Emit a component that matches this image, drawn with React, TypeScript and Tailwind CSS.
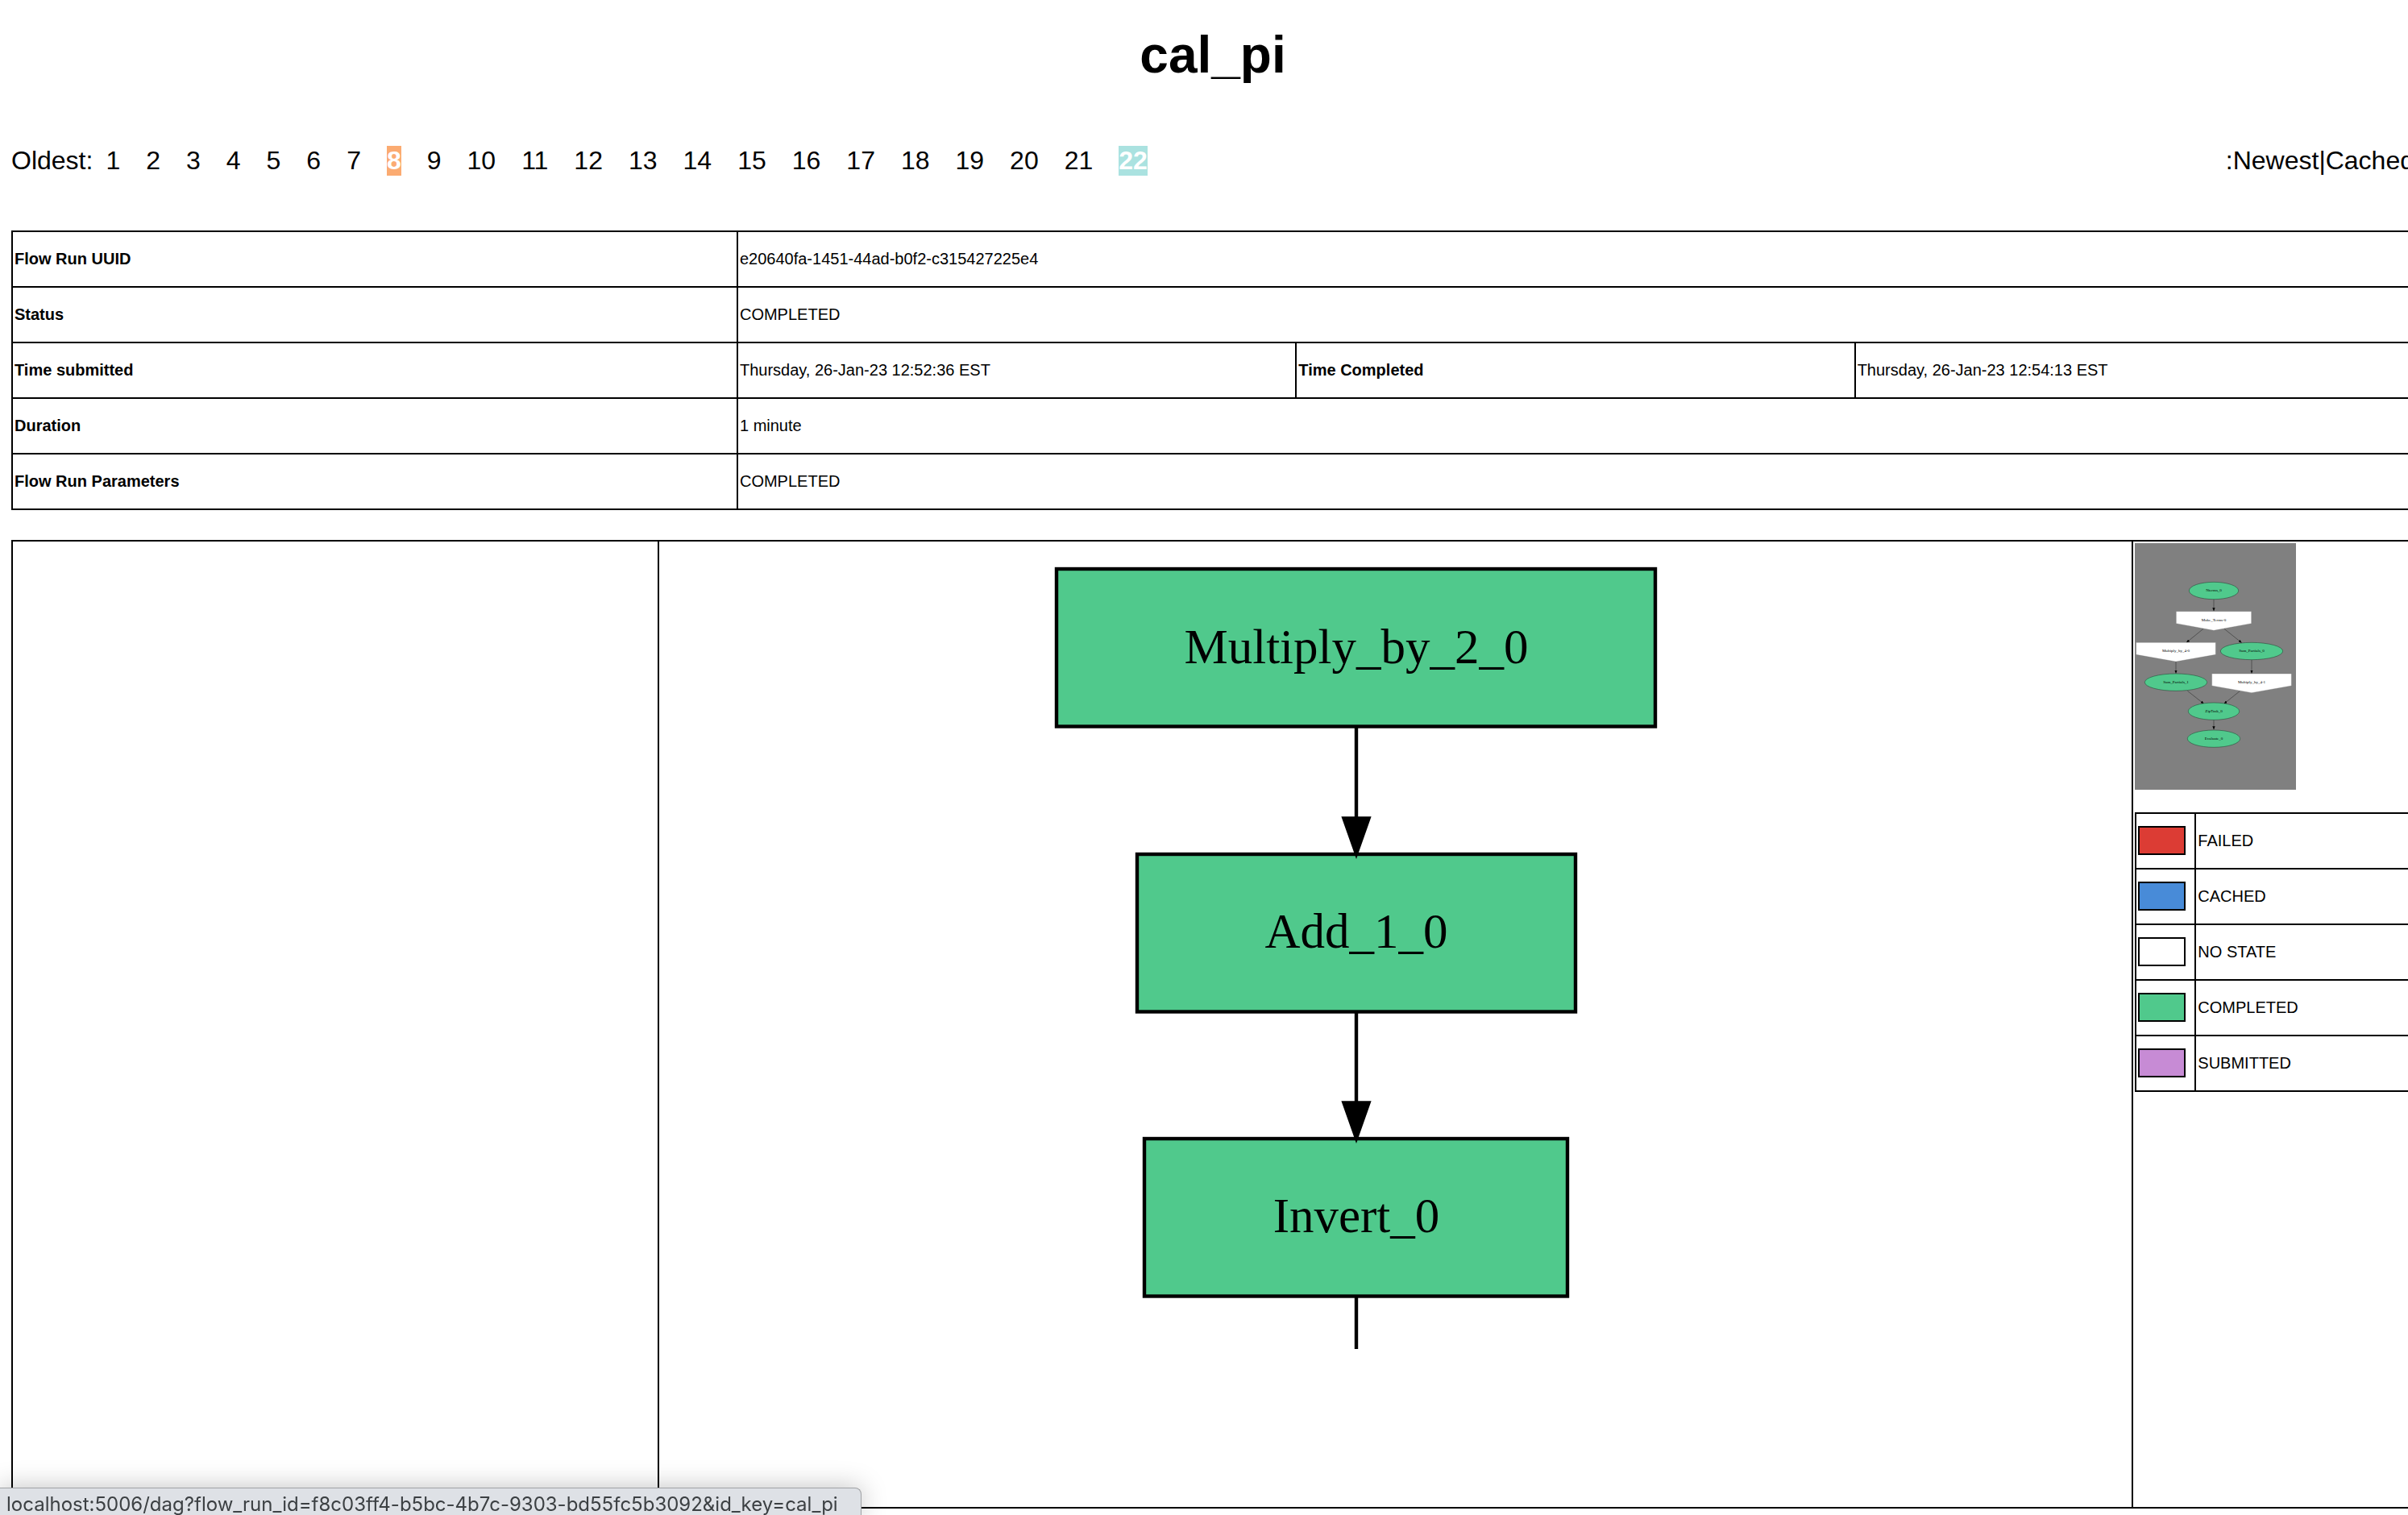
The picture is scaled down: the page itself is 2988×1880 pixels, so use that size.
import React from "react";

const GREEN = "#50c98c";

const runs = Array.from({ length: 22 }, (_, i) => i + 1);

const runStyle: Record<number, string> = {
  8: "bg-[#fbab71] font-bold text-white",
  22: "bg-[#aae2e0] font-bold text-white",
};

const cell = "border-2 border-black p-[2px] pb-1 text-left align-middle";

function RunNav() {
  return (
    <nav className="flex items-start justify-between text-[32px] leading-[37px]">
      <div className="flex gap-4">
        <span>Oldest:</span>
        <div className="flex gap-8">
          {runs.map((n) => (
            <a key={n} href={`#run-${n}`} className={runStyle[n] ?? ""}>
              {n}
            </a>
          ))}
        </div>
      </div>
      <div>
        <span>:Newest</span>|<a href="#cached">Cached</a>
      </div>
    </nav>
  );
}

function DetailRow({ label, value }: { label: string; value: string }) {
  return (
    <tr className="h-[69px]">
      <th scope="row" className={`${cell} font-bold`}>{label}</th>
      <td colSpan={3} className={cell}>{value}</td>
    </tr>
  );
}

function RunDetails() {
  return (
    <table className="w-full table-fixed border-collapse text-[20px] leading-6">
      <colgroup>
        <col className="w-[30.2%]" />
        <col />
        <col />
        <col />
      </colgroup>
      <tbody>
        <DetailRow label="Flow Run UUID" value="e20640fa-1451-44ad-b0f2-c315427225e4" />
        <DetailRow label="Status" value="COMPLETED" />
        <tr className="h-[69px]">
          <th scope="row" className={`${cell} font-bold`}>Time submitted</th>
          <td className={cell}>Thursday, 26-Jan-23 12:52:36 EST</td>
          <th scope="row" className={`${cell} font-bold`}>Time Completed</th>
          <td className={cell}>Thursday, 26-Jan-23 12:54:13 EST</td>
        </tr>
        <DetailRow label="Duration" value="1 minute" />
        <DetailRow label="Flow Run Parameters" value="COMPLETED" />
      </tbody>
    </table>
  );
}

const tasks = [
  { name: "Multiply_by_2_0", x: 491, y: 32, w: 743, base: 149 },
  { name: "Add_1_0", x: 591, y: 386, w: 544, base: 502 },
  { name: "Invert_0", x: 600, y: 739, w: 525, base: 855 },
];

function TaskGraph() {
  return (
    <svg
      width="1800"
      height="1000"
      viewBox="0 0 1800 1000"
      className="block max-w-none overflow-hidden"
      role="img"
      aria-label="Task graph"
      stroke="black"
      strokeWidth="4.4"
      fontFamily='"Liberation Serif", serif'
      fontSize="61"
    >
      {tasks.map((t) => (
        <g key={t.name}>
          <rect x={t.x} y={t.y} width={t.w} height="195.5" fill={GREEN} />
          <text x="863" y={t.base} textAnchor="middle" fill="black" stroke="none">
            {t.name}
          </text>
        </g>
      ))}
      <path d="M863 228V342M863 581V695M863 935V1010" fill="none" />
      <path d="M847.5 341.5H878.5L863 385.5Z" fill="black" />
      <path d="M847.5 694.5H878.5L863 738.5Z" fill="black" />
    </svg>
  );
}

const ellipses = [
  { name: "Nterms_0", x: 294, y: 177, rx: 92 },
  { name: "Sum_Partials_0", x: 435, y: 402, rx: 116 },
  { name: "Sum_Partials_1", x: 153, y: 518, rx: 116 },
  { name: "ZipTask_0", x: 294, y: 626, rx: 95 },
  { name: "Evaluate_0", x: 294, y: 728, rx: 98 },
];

const houses = [
  { name: "Make_Terms-0", x: 294, y: 254, hw: 140 },
  { name: "Multiply_by_4-0", x: 153, y: 370, hw: 148 },
  { name: "Multiply_by_4-1", x: 435, y: 486, hw: 148 },
];

const links = [
  [294, 209, 294, 253],
  [255, 319, 192, 370],
  [333, 319, 398, 371],
  [153, 441, 153, 485],
  [435, 434, 435, 485],
  [196, 550, 257, 598],
  [392, 550, 332, 598],
  [294, 658, 294, 694],
];

function Overview() {
  return (
    <svg
      width="200"
      height="306"
      viewBox="0 0 600 918"
      className="block bg-[#808080]"
      role="img"
      aria-label="Flow overview"
      fontFamily='"Liberation Serif", serif'
      fontSize="15"
    >
      <defs>
        <marker id="tip" viewBox="0 0 12 10" refX="12" refY="5" markerWidth="12" markerHeight="10" markerUnits="userSpaceOnUse" orient="auto">
          <path d="M0 0L12 5L0 10Z" />
        </marker>
      </defs>
      {links.map(([x1, y1, x2, y2]) => (
        <line key={`${x1}-${y1}-${x2}`} x1={x1} y1={y1} x2={x2} y2={y2} stroke="#222" strokeWidth="1.5" markerEnd="url(#tip)" />
      ))}
      {ellipses.map((e) => (
        <g key={e.name}>
          <ellipse cx={e.x} cy={e.y} rx={e.rx} ry="32" fill={GREEN} stroke="#1c3d2c" strokeWidth="1.5" />
          <text x={e.x} y={e.y + 4} textAnchor="middle">{e.name}</text>
        </g>
      ))}
      {houses.map((h) => (
        <g key={h.name}>
          <path
            d={`M${h.x - h.hw} ${h.y}H${h.x + h.hw}V${h.y + 45}L${h.x} ${h.y + 71}L${h.x - h.hw} ${h.y + 45}Z`}
            fill="white"
            stroke="#777"
            strokeWidth="1"
          />
          <text x={h.x} y={h.y + 36} textAnchor="middle">{h.name}</text>
        </g>
      ))}
    </svg>
  );
}

const states = [
  { label: "FAILED", color: "bg-[#dc3c34]" },
  { label: "CACHED", color: "bg-[#488bd8]" },
  { label: "NO STATE", color: "bg-white" },
  { label: "COMPLETED", color: "bg-[#50c98c]" },
  { label: "SUBMITTED", color: "bg-[#c78bd5]" },
];

function Legend() {
  return (
    <table className="mt-7 w-full table-fixed border-collapse text-[20px] leading-6">
      <colgroup>
        <col className="w-[74px]" />
        <col />
      </colgroup>
      <tbody>
        {states.map((s) => (
          <tr key={s.label} className="h-[69px]">
            <td className={cell}>
              <div className={`h-9 w-[59px] border-2 border-black ${s.color}`} />
            </td>
            <td className={cell}>{s.label}</td>
          </tr>
        ))}
      </tbody>
    </table>
  );
}

function FlowPanel() {
  return (
    <table className="mt-[37px] w-full table-fixed border-collapse">
      <colgroup>
        <col className="w-[26.9%]" />
        <col className="w-[61.4%]" />
        <col />
      </colgroup>
      <tbody>
        <tr className="h-[1200px]">
          <td className="border-2 border-black p-[2px]" />
          <td className="overflow-hidden border-2 border-black p-[2px] align-top">
            <TaskGraph />
          </td>
          <td className="border-2 border-black p-[2px] align-top">
            <Overview />
            <Legend />
          </td>
        </tr>
      </tbody>
    </table>
  );
}

export default function App() {
  return (
    <div className='min-h-screen overflow-hidden bg-white font-["Liberation_Sans",Arial,sans-serif] text-black'>
      <main className="-mr-2 ml-[14px]">
        <h1 className="pt-8 text-center text-[64px] leading-[72px] font-bold">cal_pi</h1>
        <div className="pt-[77px] pb-[68px]">
          <RunNav />
        </div>
        <RunDetails />
        <FlowPanel />
      </main>
      <div className='fixed bottom-0 left-0 h-[34px] rounded-tr-lg border-t border-r border-[#a0a2a5] bg-[#dee1e6] pr-7 pl-2 font-["Inter",sans-serif] text-[24px] leading-10 whitespace-nowrap text-[#3c4043] shadow-[0_0_32px_rgba(0,0,0,0.25)]'>
        localhost:5006/dag?flow_run_id=f8c03ff4-b5bc-4b7c-9303-bd55fc5b3092&amp;id_key=cal_pi
      </div>
    </div>
  );
}
